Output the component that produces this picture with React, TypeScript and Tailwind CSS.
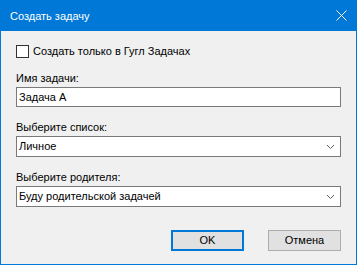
import React from 'react';

function Chevron() {
  return (
    <svg width="9" height="6" viewBox="0 0 9 6" className="shrink-0">
      <polyline points="1,1 4.5,4.5 8,1" fill="none" stroke="#5f5f5f" strokeWidth="1" />
    </svg>
  );
}

function Field({ label, value, select }: { label: string; value: string; select?: boolean }) {
  return (
    <div className="flex flex-col mt-[13px]">
      <div className="h-[15px] leading-[15px]">{label}</div>
      <div
        className={
          'mt-px flex items-center justify-between border border-[#7a7a7a] bg-white pl-[2px] pr-[5px] ' +
          (select ? 'h-[21px]' : 'h-[20px]')
        }
      >
        <span className="leading-[15px]">{value}</span>
        {select && <Chevron />}
      </div>
    </div>
  );
}

export default function App() {
  return (
    <div
      className="w-[357px] h-[265px] flex flex-col bg-[#0078d7] text-[11px] text-black"
      style={{ fontFamily: '"Liberation Sans", Arial, sans-serif' }}
    >
      <div className="h-[31px] flex items-center justify-between pl-[10px] pr-[10px] text-white">
        <span className="leading-[15px] pt-px">Создать задачу</span>
        <svg width="11" height="11" viewBox="0 0 11 11">
          <path d="M0.5 0.5 L10.5 10.5 M10.5 0.5 L0.5 10.5" stroke="#fff" strokeWidth="1" />
        </svg>
      </div>
      <div className="flex-1 mx-px mb-px bg-[#f0f0f0] px-[15px] pt-[14px] flex flex-col">
        <div className="flex items-center h-[13px]">
          <div className="w-[13px] h-[13px] border border-[#333333] bg-white shrink-0" />
          <span className="ml-[4px] leading-[15px]">Создать только в Гугл Задачах</span>
        </div>
        <Field label="Имя задачи:" value="Задача А" />
        <Field label="Выберите список:" value="Личное" select />
        <Field label="Выберите родителя:" value="Буду родительской задачей" select />
        <div className="flex justify-end gap-[24px] mt-[23px]">
          <button className="w-[73px] h-[21px] border-2 border-[#0078d7] bg-[#e1e1e1] leading-[15px]">
            OK
          </button>
          <button className="w-[73px] h-[21px] border border-[#adadad] bg-[#e1e1e1] leading-[15px]">
            Отмена
          </button>
        </div>
      </div>
    </div>
  );
}
